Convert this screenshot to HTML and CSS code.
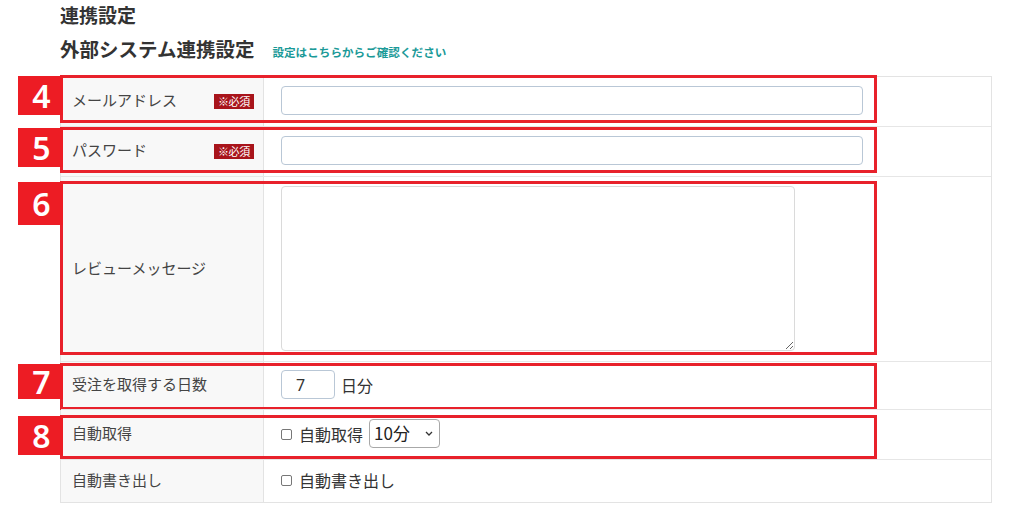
FILE: index.html
```html
<!DOCTYPE html>
<html lang="ja">
<head>
<meta charset="utf-8">
<title>連携設定</title>
<link rel="stylesheet" href="styles.css">
</head>
<body>
<div class="page">
  <h1 class="title">連携設定</h1>
  <div class="subhead">
    <h2 class="subtitle">外部システム連携設定</h2>
    <a class="help-link" href="#">設定はこちらからご確認ください</a>
  </div>

  <div class="form-table">
    <div class="row row-std">
      <div class="th"><span>メールアドレス</span><span class="req">※必須</span></div>
      <div class="td"><input class="text-input" type="text"></div>
      <div class="mark mark-4"><span class="num">4</span></div>
    </div>
    <div class="row row-std">
      <div class="th"><span>パスワード</span><span class="req">※必須</span></div>
      <div class="td"><input class="text-input" type="password"></div>
      <div class="mark mark-5"><span class="num">5</span></div>
    </div>
    <div class="row row-tall">
      <div class="th"><span>レビューメッセージ</span></div>
      <div class="td td-top"><textarea class="message"></textarea></div>
      <div class="mark mark-6"><span class="num">6</span></div>
    </div>
    <div class="row row-days">
      <div class="th"><span>受注を取得する日数</span></div>
      <div class="td"><input class="days" type="text" value="7"><span class="unit">日分</span></div>
      <div class="mark mark-7"><span class="num">7</span></div>
    </div>
    <div class="row row-std">
      <div class="th"><span>自動取得</span></div>
      <div class="td">
        <label class="check"><input type="checkbox" class="cb"><span>自動取得</span></label>
        <span class="select-wrap">
          <select class="interval"><option>10分</option></select>
          <svg class="chev" width="8" height="5" viewBox="0 0 8 5"><path d="M1 1 L4 4 L7 1" fill="none" stroke="#333" stroke-width="1.3"/></svg>
        </span>
      </div>
      <div class="mark mark-8"><span class="num">8</span></div>
    </div>
    <div class="row row-last">
      <div class="th"><span>自動書き出し</span></div>
      <div class="td">
        <label class="check"><input type="checkbox" class="cb"><span>自動書き出し</span></label>
      </div>
    </div>
  </div>
</div>
</body>
</html>
```
FILE: styles.css
```css
* { box-sizing: border-box; }
html, body { margin: 0; padding: 0; background: #fff; }
body {
  font-family: "Noto Sans CJK JP", "Noto Sans", sans-serif;
  color: #444;
  width: 1024px;
  height: 522px;
  overflow: hidden;
}
.page { padding: 0 32px 0 60px; }

.title {
  margin: 0;
  font-size: 19px;
  line-height: 30px;
  font-weight: 700;
  color: #333;
}
.subhead {
  display: flex;
  align-items: baseline;
  gap: 18px;
  height: 46px;
  padding-top: 4px;
}
.subtitle {
  margin: 0;
  font-size: 19.5px;
  line-height: 30px;
  font-weight: 700;
  color: #333;
}
.help-link {
  font-size: 11.6px;
  font-weight: 700;
  color: #1b9a98;
  text-decoration: none;
}

.form-table {
  border: 1px solid #e3e3e3;
  width: 932px;
}
.row {
  position: relative;
  display: grid;
  grid-template-columns: 203px 1fr;
  border-top: 1px solid #e6e6e6;
}
.row:first-child { border-top: none; }
.row-std { height: 50px; }
.row:first-child.row-std { height: 49px; }
.row-tall { height: 185px; }
.row-days { height: 48px; }
.row-last { height: 43px; }

.th {
  background: #f8f8f8;
  border-right: 1px solid #e3e3e3;
  display: flex;
  align-items: center;
  justify-content: space-between;
  padding: 0 9px 4px 11px;
  font-size: 15px;
  color: #444;
}
.td {
  display: flex;
  align-items: center;
  padding: 0 17px 2px;
  font-size: 16px;
  color: #333;
}
.td-top { align-items: flex-start; padding-top: 9px; }

.req {
  background: #a8141b;
  color: #fff;
  font-size: 11px;
  line-height: 15px;
  padding: 0 4px;
  letter-spacing: -0.3px;
  margin-top: 3px;
}

.text-input {
  width: 582px;
  height: 29px;
  border: 1px solid #b9c7d6;
  border-radius: 4px;
  background: #fff;
  outline: none;
}
.message {
  width: 514px;
  height: 165px;
  border: 1px solid #dadada;
  border-radius: 4px;
  resize: both;
  background: #fff;
  outline: none;
}
.days {
  width: 54px;
  height: 29px;
  border: 1px solid #b9c7d6;
  border-radius: 4px;
  padding: 0 0 0 14px;
  font-family: "Noto Sans", "Noto Sans CJK JP", sans-serif;
  font-size: 16px;
  color: #333;
  outline: none;
}
.unit { margin-left: 6px; }

.check {
  display: flex;
  align-items: center;
  gap: 7px;
}
.cb {
  appearance: none;
  -webkit-appearance: none;
  margin: 1px 0 0;
  width: 11px;
  height: 11px;
  border: 1px solid #777;
  border-radius: 2px;
  background: #fff;
}
.select-wrap {
  position: relative;
  display: inline-flex;
  margin-left: 6px;
}
.interval {
  appearance: none;
  -webkit-appearance: none;
  width: 71px;
  height: 29px;
  border: 1px solid #a8a8a8;
  border-radius: 4px;
  font-family: "Noto Sans CJK JP", sans-serif;
  font-size: 17px;
  color: #222;
  background: #fff;
  padding: 0 0 2px 4px;
}
.chev {
  position: absolute;
  right: 7px;
  top: 12px;
  pointer-events: none;
}

.mark {
  position: absolute;
  left: -1px;
  width: 817px;
  border: 3px solid #e8212b;
  pointer-events: none;
}
.mark-4 { top: -2px; height: 48px; }
.mark-5 { top: 0; height: 46px; }
.mark-6 { top: 4px; height: 174px; }
.mark-7 { top: 1px; height: 47px; }
.mark-8 { top: 5px; height: 44px; }

.num {
  position: absolute;
  left: -45px;
  top: -2px;
  width: 45px;
  height: 39px;
  background: #ed1c24;
  color: #fff;
  font-family: "Noto Sans", sans-serif;
  font-weight: 600;
  font-size: 32px;
  line-height: 39px;
  text-align: center;
  padding-left: 2px;
}
.mark-6 .num { height: 43px; line-height: 43px; }
.mark-7 .num { height: 35px; line-height: 35px; }
```
